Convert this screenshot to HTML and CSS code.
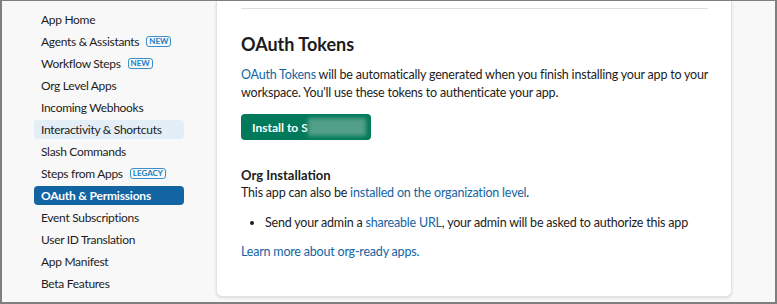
FILE: index.html
```html
<!DOCTYPE html>
<html>
<head>
<meta charset="utf-8">
<link rel="stylesheet" href="styles.css">
</head>
<body>
<div class="window">
  <nav class="sidebar">
    <a class="nav-item">App Home</a>
    <a class="nav-item">Agents &amp; Assistants <span class="badge">NEW</span></a>
    <a class="nav-item">Workflow Steps <span class="badge">NEW</span></a>
    <a class="nav-item">Org Level Apps</a>
    <a class="nav-item">Incoming Webhooks</a>
    <a class="nav-item hover">Interactivity &amp; Shortcuts</a>
    <a class="nav-item">Slash Commands</a>
    <a class="nav-item">Steps from Apps <span class="badge">LEGACY</span></a>
    <a class="nav-item active">OAuth &amp; Permissions</a>
    <a class="nav-item">Event Subscriptions</a>
    <a class="nav-item">User ID Translation</a>
    <a class="nav-item">App Manifest</a>
    <a class="nav-item">Beta Features</a>
  </nav>
  <main class="card">
    <hr class="divider">
    <h2 class="title">OAuth Tokens</h2>
    <p class="text"><a class="link">OAuth Tokens</a> will be automatically generated when you finish installing your app to your workspace. You'll use these tokens to authenticate your app.</p>
    <button class="install"><span class="label">Install to S</span><span class="blur"></span></button>
    <h3 class="subtitle">Org Installation</h3>
    <p class="text tight">This app can also be <a class="link">installed on the organization level</a>.</p>
    <ul class="list">
      <li>Send your admin a <a class="link">shareable URL</a>, your admin will be asked to authorize this app</li>
    </ul>
    <p class="text"><a class="link">Learn more about org-ready apps.</a></p>
  </main>
</div>
</body>
</html>
```

FILE: styles.css
```css
* { box-sizing: border-box; }
html, body { margin: 0; padding: 0; }
body {
  font-family: Lato, "Noto Sans", sans-serif;
  color: #1d1c1d;
}
.window {
  width: 777px;
  height: 304px;
  border: 2px solid #7f7f7f;
  border-top-width: 1px;
  background: #f8f8f8;
  display: flex;
  align-items: flex-start;
  gap: 32px;
  padding-left: 32px;
  overflow: hidden;
}
.sidebar {
  width: 150px;
  flex: none;
  display: flex;
  flex-direction: column;
  gap: 3px;
  padding-top: 9px;
}
.nav-item {
  display: flex;
  align-items: center;
  height: 19px;
  padding: 0 7px;
  font-size: 12px;
  letter-spacing: -0.3px;
  color: #1d1c1d;
  border-radius: 4px;
  white-space: nowrap;
}
.nav-item.hover { background: #e3eef7; }
.nav-item.active {
  background: #1264a3;
  color: #fff;
  font-weight: 700;
  letter-spacing: -0.2px;
}
.badge {
  display: inline-block;
  margin-left: 7px;
  border: 1px solid #3a8ec9;
  color: #1d7ec0;
  border-radius: 3px;
  font-size: 8px;
  letter-spacing: 0;
  font-weight: 700;
  line-height: 9px;
  padding: 0 2px;
}
.card {
  width: 516px;
  flex: none;
  height: 296px;
  background: #fff;
  border: 1px solid #e2e2e2;
  border-top: 0;
  border-radius: 0 0 6px 6px;
  box-shadow: 0 1px 3px rgba(0,0,0,0.12);
  padding: 7px 23px 0 24px;
}
.divider {
  margin: 0;
  border: 0;
  border-top: 1px solid #dedede;
}
.title {
  margin: 24px 0 0;
  font-size: 18px;
  font-weight: 700;
  line-height: 22px;
}
.text {
  margin: 11px 0 0;
  font-size: 12.5px;
  letter-spacing: -0.2px;
  line-height: 18px;
}
.link { color: #1264a3; }
.install {
  display: flex;
  align-items: center;
  margin-top: 12px;
  height: 26px;
  width: 130px;
  padding: 0 11px;
  border: 0;
  border-radius: 4px;
  background: #007a5a;
  color: #fff;
  font-family: Lato, sans-serif;
  font-size: 12px;
  font-weight: 700;
  white-space: nowrap;
}
.label { flex: none; }
.blur {
  flex: none;
  background: #52a088;
  filter: blur(2px);
  width: 58px;
  height: 18px;
  display: inline-block;
}
.subtitle {
  margin: 26px 0 0;
  font-size: 13px;
  font-weight: 700;
  line-height: 18px;
}
.text.tight { margin-top: 0; }
.list {
  margin: 12px 0 0;
  padding-left: 24px;
  font-size: 12.5px;
  letter-spacing: -0.2px;
  line-height: 18px;
}
```
